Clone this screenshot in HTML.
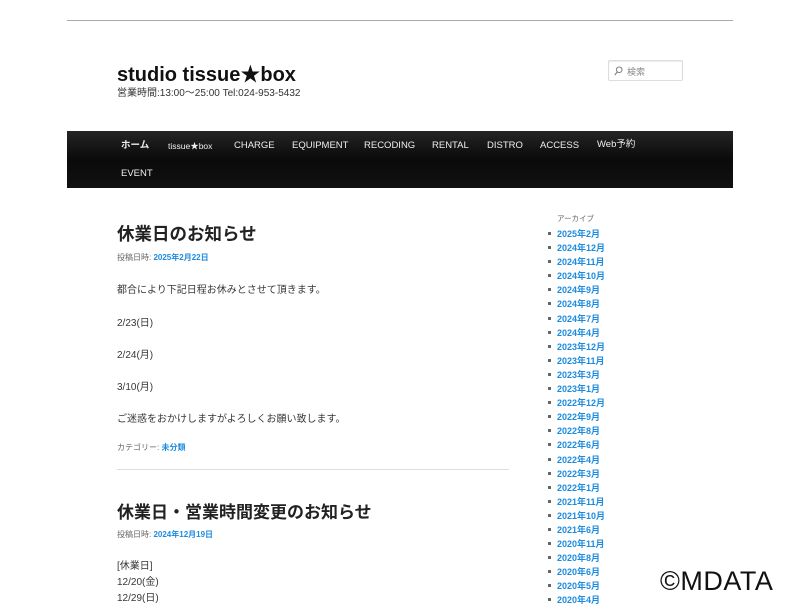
<!DOCTYPE html>
<html><head><meta charset="utf-8"><style>
*{margin:0;padding:0;box-sizing:border-box}
body{width:800px;height:600px;overflow:hidden;background:#fff;font-family:"Liberation Sans","Noto Sans CJK JP",sans-serif;color:#373737;position:relative}
.abs{position:absolute}
.line{left:67px;top:20px;width:666px;height:1px;background:#aaa}
h1{left:117px;top:58px;font-size:20px;font-weight:bold;color:#111;white-space:nowrap}
.desc{left:117px;top:84px;font-size:10px;color:#333}
.search{left:608px;top:60px;width:75px;height:21px;border:1px solid #ddd;border-radius:2px;font-size:9px;color:#888;padding:4px 0 0 18px;box-shadow:inset 0 1px 1px rgba(0,0,0,.08)}
.search svg{position:absolute;left:5px;top:5px}
nav{left:67px;top:131px;width:666px;height:57px;background:linear-gradient(#252525,#0a0a0a 50%,#111)}
nav span{position:absolute;font-size:9.5px;line-height:12px;color:#eee;white-space:nowrap}
.post h2{position:absolute;font-size:17.5px;font-weight:bold;color:#222;white-space:nowrap}
.meta{font-size:8px;color:#666;white-space:nowrap}
.meta b{color:#1b8be0}
.p{font-size:10px;color:#373737;white-space:nowrap}
.hr{left:117px;top:469px;width:392px;height:1px;background:#ddd}
.arch{left:557px;top:213px;font-size:7.5px;color:#666}
ul{position:absolute;left:547px;top:227px;list-style:none}
li{height:14.1px;font-size:9px;font-weight:bold;color:#1b8be0;white-space:nowrap;position:relative;padding-left:10px}
li:before{content:"";position:absolute;left:1px;top:5px;width:3px;height:3px;background:#666}
.wm{left:660px;top:566px;font-size:27px;color:#111;letter-spacing:0.5px}
</style></head><body>
<div class="abs line"></div>
<h1 class="abs">studio tissue★box</h1>
<div class="abs desc">営業時間:13:00～25:00 Tel:024-953-5432</div>
<div class="abs search"><svg width="9" height="10" viewBox="0 0 9 10"><circle cx="5.2" cy="3.8" r="2.8" fill="none" stroke="#888" stroke-width="1.1"/><path d="M3.2 6 L0.8 9" stroke="#888" stroke-width="1.3"/></svg>検索</div>
<nav class="abs">
<span style="left:54px;top:9px;font-weight:bold">ホーム</span>
<span style="left:101px;top:9px;font-size:8.5px">tissue★box</span>
<span style="left:167px;top:9px">CHARGE</span>
<span style="left:225px;top:9px">EQUIPMENT</span>
<span style="left:297px;top:9px">RECODING</span>
<span style="left:365px;top:9px">RENTAL</span>
<span style="left:420px;top:9px">DISTRO</span>
<span style="left:473px;top:9px">ACCESS</span>
<span style="left:530px;top:8px">Web予約</span>
<span style="left:54px;top:37px">EVENT</span>
</nav>
<div class="post">
<h2 style="left:117px;top:221px">休業日のお知らせ</h2>
<div class="abs meta" style="left:117px;top:252px">投稿日時: <b>2025年2月22日</b></div>
<div class="abs p" style="left:117px;top:281px">都合により下記日程お休みとさせて頂きます。</div>
<div class="abs p" style="left:117px;top:314px">2/23(日)</div>
<div class="abs p" style="left:117px;top:346px">2/24(月)</div>
<div class="abs p" style="left:117px;top:378px">3/10(月)</div>
<div class="abs p" style="left:117px;top:410px">ご迷惑をおかけしますがよろしくお願い致します。</div>
<div class="abs meta" style="left:117px;top:442px">カテゴリー: <b>未分類</b></div>
<div class="abs hr"></div>
<h2 style="left:117px;top:498px;font-size:17px">休業日・営業時間変更のお知らせ</h2>
<div class="abs meta" style="left:117px;top:529px">投稿日時: <b>2024年12月19日</b></div>
<div class="abs p" style="left:117px;top:557px">[休業日]</div>
<div class="abs p" style="left:117px;top:573px">12/20(金)</div>
<div class="abs p" style="left:117px;top:589px">12/29(日)</div>
</div>
<div class="abs arch">アーカイブ</div>
<ul>
<li>2025年2月</li><li>2024年12月</li><li>2024年11月</li><li>2024年10月</li><li>2024年9月</li><li>2024年8月</li><li>2024年7月</li><li>2024年4月</li><li>2023年12月</li><li>2023年11月</li><li>2023年3月</li><li>2023年1月</li><li>2022年12月</li><li>2022年9月</li><li>2022年8月</li><li>2022年6月</li><li>2022年4月</li><li>2022年3月</li><li>2022年1月</li><li>2021年11月</li><li>2021年10月</li><li>2021年6月</li><li>2020年11月</li><li>2020年8月</li><li>2020年6月</li><li>2020年5月</li><li>2020年4月</li>
</ul>
<div class="abs wm">©MDATA</div>
</body></html>
